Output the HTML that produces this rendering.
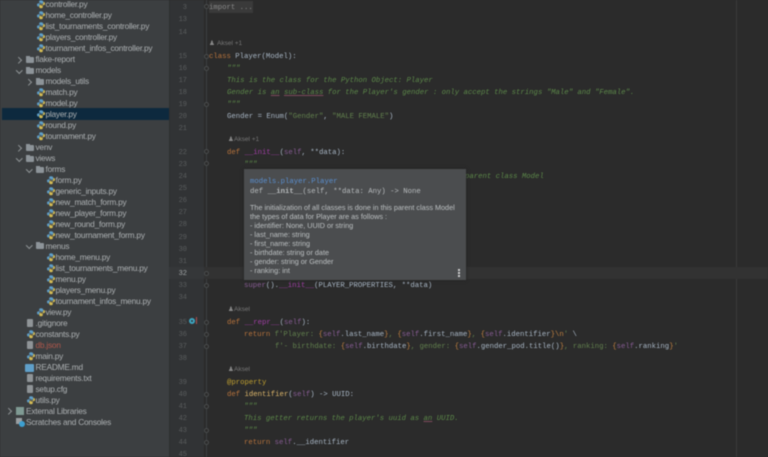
<!DOCTYPE html>
<html><head><meta charset="utf-8">
<style>
html,body{margin:0;padding:0;width:768px;height:457px;overflow:hidden;background:#2b2b2b}
#w{position:absolute;left:0;top:0;width:768px;height:457px;overflow:hidden;filter:blur(.45px)}
.a{position:absolute}
.r{position:absolute;font:8.3px/11px "Liberation Sans",sans-serif;letter-spacing:-.22px;color:#adb1b3;white-space:pre;height:11px;margin-top:1px}
.c{position:absolute;font:7.3px/12px "Liberation Mono",monospace;color:#a9b7c6;white-space:pre;height:12px;left:209px;margin-top:2px}
.n{position:absolute;font:7px/12px "Liberation Mono",monospace;color:#5a5d5e;left:171px;width:16px;text-align:right;margin-top:2px}
.h{position:absolute;font:6.5px/10px "Liberation Sans",sans-serif;color:#787878;white-space:pre;margin-top:1px}
.k{color:#b9743c}.s{color:#62814e}.d{color:#5d8a4a;font-style:italic}.f{color:#e0b96c}.m{color:#a13ea6}.e{color:#875c94}.g{color:#c0a030}.o{color:#c08040}
.u{text-decoration:underline;text-decoration-color:#7d4a5c}
.fo{position:absolute;width:5px;height:5px;border:1px solid #4a4d4e;border-radius:50%;left:203.500px;background:#2b2b2b;box-sizing:border-box;margin-top:1px}
.t{font:7.25px/10px "Liberation Sans",sans-serif;color:#bcc0c2;position:absolute;left:6px;white-space:pre}
.ch{position:absolute;width:3.500px;height:3.500px;border-right:1px solid #8f9496;border-bottom:1px solid #8f9496;margin-top:1px}
.cr{transform:rotate(-45deg)}.cd{transform:rotate(45deg)}
.i{position:absolute;width:8px;height:8.500px;margin-top:1px}
.fd{position:absolute;width:8px;height:5.500px;background:#8d9499;border-radius:1px;margin-top:1px}
.fd:before{content:"";position:absolute;left:0;top:-1.500px;width:4px;height:2px;background:#8d9499}
.tx{position:absolute;width:6px;height:8px;background:#8f9497;border-radius:1px;margin-top:1px}
</style></head><body>
<svg width="0" height="0" style="position:absolute"><symbol id="p" viewBox="0 0 9 9"><path d="M4.500 0C2.800 0 2.500.7 2.500 1.500V3H4.700v.5H1.500C.5 3.500 0 4.200 0 5.200S.6 7 1.500 7h1V5.500c0-.9.7-1.500 1.500-1.500h2c.7 0 1-.5 1-1.100V1.500C7 .6 6 0 4.500 0z" fill="#5f9fc9"/><path d="M4.500 9C6.200 9 6.500 8.300 6.500 7.500V6H4.300v-.5h3.200c1 0 1.500-.7 1.500-1.700S8.400 2 7.500 2h-.4v1.500c0 .9-.7 1.500-1.500 1.500h-2c-.7 0-1 .5-1 1.100V7.500C2.600 8.400 3 9 4.500 9z" fill="#d8bf55"/></symbol></svg>
<div id="w">
<div class="a" style="left:0;top:0;width:169px;height:457px;background:#3c3f41"></div>
<div class="a" style="left:169px;top:0;width:35px;height:457px;background:#313335"></div>
<div class="a" style="left:169px;top:0;width:1px;height:457px;background:#2d2f30"></div>
<div class="a" style="left:206px;top:0;width:1px;height:457px;background:#3e4143"></div>
<div class="a" style="left:736px;top:0;width:1px;height:457px;background:#3c3c3c"></div>
<div class="a" style="left:204px;top:267px;width:564px;height:12px;background:#323232"></div>
<div class="a" style="left:169px;top:267px;width:35px;height:12px;background:#353739"></div>
<div class="a" style="left:2px;top:108px;width:167px;height:12px;background:#0d293e"></div>

<!-- project tree -->
<svg class="i" style="left:37px;top:-1px"><use href="#p"/></svg><div class="r" style="left:45.500px;top:-2px">controller.py</div>
<svg class="i" style="left:37px;top:10px"><use href="#p"/></svg><div class="r" style="left:45.500px;top:9px">home_controller.py</div>
<svg class="i" style="left:37px;top:21px"><use href="#p"/></svg><div class="r" style="left:45.500px;top:20px">list_tournaments_controller.py</div>
<svg class="i" style="left:37px;top:32px"><use href="#p"/></svg><div class="r" style="left:45.500px;top:31px">players_controller.py</div>
<svg class="i" style="left:37px;top:43px"><use href="#p"/></svg><div class="r" style="left:45.500px;top:42px">tournament_infos_controller.py</div>
<div class="ch cr" style="left:16px;top:57px"></div><div class="fd" style="left:26px;top:56px"></div><div class="r" style="left:35.500px;top:53px">flake-report</div>
<div class="ch cd" style="left:17px;top:67px"></div><div class="fd" style="left:26px;top:67px"></div><div class="r" style="left:35.500px;top:64px">models</div>
<div class="ch cr" style="left:26px;top:79px"></div><div class="fd" style="left:36px;top:78px"></div><div class="r" style="left:45.500px;top:75px">models_utils</div>
<svg class="i" style="left:37px;top:87px"><use href="#p"/></svg><div class="r" style="left:45.500px;top:86px">match.py</div>
<svg class="i" style="left:37px;top:98px"><use href="#p"/></svg><div class="r" style="left:45.500px;top:97px">model.py</div>
<svg class="i" style="left:37px;top:109px"><use href="#p"/></svg><div class="r" style="left:45.500px;top:108px">player.py</div>
<svg class="i" style="left:37px;top:120px"><use href="#p"/></svg><div class="r" style="left:45.500px;top:119px">round.py</div>
<svg class="i" style="left:37px;top:131px"><use href="#p"/></svg><div class="r" style="left:45.500px;top:130px">tournament.py</div>
<div class="ch cr" style="left:16px;top:145px"></div><div class="fd" style="left:26px;top:144px"></div><div class="r" style="left:35.500px;top:141px">venv</div>
<div class="ch cd" style="left:17px;top:155px"></div><div class="fd" style="left:26px;top:155px"></div><div class="r" style="left:35.500px;top:152px">views</div>
<div class="ch cd" style="left:27px;top:166px"></div><div class="fd" style="left:36px;top:166px"></div><div class="r" style="left:45.500px;top:163px">forms</div>
<svg class="i" style="left:47px;top:175px"><use href="#p"/></svg><div class="r" style="left:55.500px;top:174px">form.py</div>
<svg class="i" style="left:47px;top:186px"><use href="#p"/></svg><div class="r" style="left:55.500px;top:185px">generic_inputs.py</div>
<svg class="i" style="left:47px;top:197px"><use href="#p"/></svg><div class="r" style="left:55.500px;top:196px">new_match_form.py</div>
<svg class="i" style="left:47px;top:208px"><use href="#p"/></svg><div class="r" style="left:55.500px;top:207px">new_player_form.py</div>
<svg class="i" style="left:47px;top:219px"><use href="#p"/></svg><div class="r" style="left:55.500px;top:218px">new_round_form.py</div>
<svg class="i" style="left:47px;top:230px"><use href="#p"/></svg><div class="r" style="left:55.500px;top:229px">new_tournament_form.py</div>
<div class="ch cd" style="left:27px;top:242px"></div><div class="fd" style="left:36px;top:242px"></div><div class="r" style="left:45.500px;top:240px">menus</div>
<svg class="i" style="left:47px;top:252px"><use href="#p"/></svg><div class="r" style="left:55.500px;top:251px">home_menu.py</div>
<svg class="i" style="left:47px;top:263px"><use href="#p"/></svg><div class="r" style="left:55.500px;top:262px">list_tournaments_menu.py</div>
<svg class="i" style="left:47px;top:274px"><use href="#p"/></svg><div class="r" style="left:55.500px;top:273px">menu.py</div>
<svg class="i" style="left:47px;top:285px"><use href="#p"/></svg><div class="r" style="left:55.500px;top:284px">players_menu.py</div>
<svg class="i" style="left:47px;top:296px"><use href="#p"/></svg><div class="r" style="left:55.500px;top:295px">tournament_infos_menu.py</div>
<svg class="i" style="left:37px;top:307px"><use href="#p"/></svg><div class="r" style="left:45.500px;top:306px">view.py</div>
<div class="tx" style="left:27px;top:318px"></div><div class="r" style="left:35.500px;top:317px">.gitignore</div>
<svg class="i" style="left:27px;top:329px"><use href="#p"/></svg><div class="r" style="left:35.500px;top:328px">constants.py</div>
<div class="tx" style="left:27px;top:340px"></div><div class="r" style="left:35.500px;top:339px;color:#b0574b">db.json</div>
<svg class="i" style="left:27px;top:351px"><use href="#p"/></svg><div class="r" style="left:35.500px;top:350px">main.py</div>
<div class="a" style="left:25px;top:364px;width:9px;height:8px;background:#5f9fc9;border-radius:1px"></div><div class="r" style="left:35.500px;top:361px">README.md</div>
<div class="tx" style="left:27px;top:373px"></div><div class="r" style="left:35.500px;top:372px">requirements.txt</div>
<div class="tx" style="left:27px;top:384px"></div><div class="r" style="left:35.500px;top:383px">setup.cfg</div>
<svg class="i" style="left:27px;top:395px"><use href="#p"/></svg><div class="r" style="left:35.500px;top:394px">utils.py</div>
<div class="ch cr" style="left:6px;top:408px"></div><div class="a" style="left:16px;top:407px;width:8px;height:8px;background:#7f9a93"></div><div class="r" style="left:26px;top:405px">External Libraries</div>
<div class="a" style="left:16px;top:418px;width:6px;height:6px;background:#9a9fa2"></div><div class="a" style="left:19px;top:421px;width:6px;height:6px;border-radius:50%;background:#3d9fd0"></div><div class="r" style="left:26px;top:416px">Scratches and Consoles</div>

<!-- line numbers -->
<div class="n" style="top:0">3</div><div class="n" style="top:12px">13</div><div class="n" style="top:25px">14</div>
<div class="n" style="top:49px">15</div><div class="n" style="top:61px">16</div><div class="n" style="top:73px">17</div><div class="n" style="top:85px">18</div><div class="n" style="top:97px">19</div><div class="n" style="top:109px">20</div><div class="n" style="top:121px">21</div>
<div class="n" style="top:145px">22</div><div class="n" style="top:157px">23</div><div class="n" style="top:169px">24</div><div class="n" style="top:181px">25</div><div class="n" style="top:193px">26</div><div class="n" style="top:205px">27</div><div class="n" style="top:217px">28</div><div class="n" style="top:230px">29</div><div class="n" style="top:242px">30</div><div class="n" style="top:254px">31</div>
<div class="n" style="top:266px;color:#a4a8a9">32</div><div class="n" style="top:278px">33</div><div class="n" style="top:290px">34</div>
<div class="n" style="top:315px">35</div><div class="n" style="top:327px">36</div><div class="n" style="top:339px">37</div><div class="n" style="top:351px">38</div>
<div class="n" style="top:375px">39</div><div class="n" style="top:387px">40</div><div class="n" style="top:399px">41</div><div class="n" style="top:411px">42</div><div class="n" style="top:423px">43</div><div class="n" style="top:435px">44</div><div class="n" style="top:447px">45</div>

<!-- fold marks -->
<div class="fo" style="top:3px"></div><div class="fo" style="top:53px"></div><div class="fo" style="top:65px"></div><div class="fo" style="top:101px"></div><div class="fo" style="top:148px"></div><div class="fo" style="top:160px"></div><div class="fo" style="top:270px"></div><div class="fo" style="top:282px"></div><div class="fo" style="top:319px"></div><div class="fo" style="top:331px"></div><div class="fo" style="top:343px"></div><div class="fo" style="top:391px"></div><div class="fo" style="top:403px"></div><div class="fo" style="top:427px"></div><div class="fo" style="top:439px"></div>
<div class="a" style="left:189px;top:318px;width:6px;height:6px;border-radius:50%;border:2px solid #3da5c0;box-sizing:border-box"></div>
<div class="a" style="left:196px;top:317px;width:1px;height:7px;background:#b05050"></div>

<!-- code -->
<div class="a" style="left:209px;top:1px;width:44px;height:12px;background:#3a3a3a"></div>
<div class="c" style="top:0;color:#8a8a8a">import ...</div>
<div class="a" style="left:209px;top:38px;width:6px;height:10px;font:6.500px/10px 'Liberation Sans',sans-serif;color:#8a8a8a;margin-top:1px">♟</div>
<div class="h" style="left:217px;top:38px">Aksel +1</div>
<div class="c" style="top:49px"><span class="k">class</span> Player(Model):</div>
<div class="c" style="top:61px;left:227px"><span class="d">"""</span></div>
<div class="c" style="top:73px;left:227px"><span class="d">This is the class for the Python Object: Player</span></div>
<div class="c" style="top:85px;left:227px"><span class="d">Gender is <span class="u">an</span> <span class="u">sub-class</span> for the Player's gender : only accept the strings "Male" and "Female".</span></div>
<div class="c" style="top:97px;left:227px"><span class="d">"""</span></div>
<div class="c" style="top:109px;left:227px">Gender = Enum(<span class="s">"Gender"</span>, <span class="s">"MALE FEMALE"</span>)</div>
<div class="a" style="left:228px;top:134px;font:6.500px/10px 'Liberation Sans',sans-serif;color:#8a8a8a;margin-top:1px">♟</div>
<div class="h" style="left:234px;top:134px">Aksel +1</div>
<div class="c" style="top:145px;left:227px"><span class="k">def</span> <span class="m">__init__</span>(<span class="e">self</span>, **data):</div>
<div class="c" style="top:157px;left:244px"><span class="d">"""</span></div>
<div class="c" style="top:169px;left:465px"><span class="d">parent class Model</span></div>
<div class="c" style="top:278px;left:244px"><span class="e">super</span>().<span class="m">__init__</span>(PLAYER_PROPERTIES, **data)</div>
<div class="a" style="left:228px;top:304px;font:6.500px/10px 'Liberation Sans',sans-serif;color:#8a8a8a;margin-top:1px">♟</div>
<div class="h" style="left:234px;top:304px">Aksel</div>
<div class="c" style="top:315px;left:227px"><span class="k">def</span> <span class="m">__repr__</span>(<span class="e">self</span>):</div>
<div class="c" style="top:327px;left:244px"><span class="k">return</span> <span class="s">f'Player: </span><span class="o">{</span><span class="e">self</span>.last_name<span class="o">}</span><span class="s">, </span><span class="o">{</span><span class="e">self</span>.first_name<span class="o">}</span><span class="s">, </span><span class="o">{</span><span class="e">self</span>.identifier<span class="o">}\n</span><span class="s">'</span> \</div>
<div class="c" style="top:339px;left:275px"><span class="s">f'- birthdate: </span><span class="o">{</span><span class="e">self</span>.birthdate<span class="o">}</span><span class="s">, gender: </span><span class="o">{</span><span class="e">self</span>.gender_pod.title()<span class="o">}</span><span class="s">, ranking: </span><span class="o">{</span><span class="e">self</span>.ranking<span class="o">}</span><span class="s">'</span></div>
<div class="a" style="left:228px;top:364px;font:6.500px/10px 'Liberation Sans',sans-serif;color:#8a8a8a;margin-top:1px">♟</div>
<div class="h" style="left:234px;top:364px">Aksel</div>
<div class="c" style="top:375px;left:227px"><span class="g">@property</span></div>
<div class="c" style="top:387px;left:227px"><span class="k">def</span> <span class="f">identifier</span>(<span class="e">self</span>) -&gt; UUID:</div>
<div class="c" style="top:399px;left:244px"><span class="d">"""</span></div>
<div class="c" style="top:411px;left:244px"><span class="d">This getter returns the player's uuid as <span class="u">an</span> UUID.</span></div>
<div class="c" style="top:423px;left:244px"><span class="d">"""</span></div>
<div class="c" style="top:435px;left:244px"><span class="k">return</span> <span class="e">self</span>.__identifier</div>

<!-- popup -->
<div class="a" style="left:244px;top:169px;width:222px;height:111px;background:#4b4d4f;box-shadow:0 0 3px #222">
<div class="a" style="left:6px;top:7px;font:7.300px/12px 'Liberation Mono',monospace;color:#5a8fd0;white-space:pre">models.player.Player</div>
<div class="a" style="left:6px;top:17px;font:7.300px/12px 'Liberation Mono',monospace;color:#b8bcbe;white-space:pre">def <b>__init__</b>(self, **data: Any) -&gt; None</div>
<div class="t" style="top:34px">The initialization of all classes is done in this parent class Model</div>
<div class="t" style="top:43px">the types of data for Player are as follows :</div>
<div class="t" style="top:52px">- identifier: None, UUID or string</div>
<div class="t" style="top:61px">- last_name: string</div>
<div class="t" style="top:70px">- first_name: string</div>
<div class="t" style="top:79px">- birthdate: string or date</div>
<div class="t" style="top:88px">- gender: string or Gender</div>
<div class="t" style="top:97px">- ranking: int</div>
<div class="a" style="left:214px;top:100px;width:1.500px;height:1.500px;background:#d0d0d0;box-shadow:0 3px 0 #d0d0d0,0 6px 0 #d0d0d0"></div>
</div>
</div>
</body></html>
